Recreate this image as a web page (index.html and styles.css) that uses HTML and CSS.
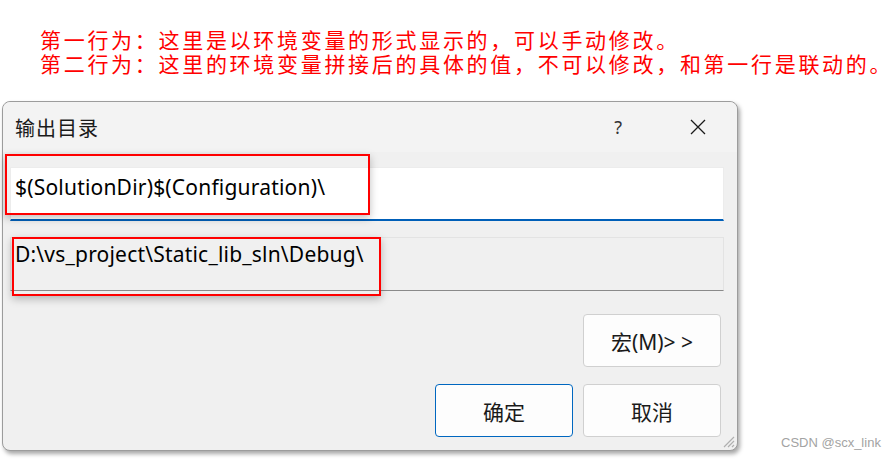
FILE: index.html
```html
<!DOCTYPE html>
<html lang="zh">
<head>
<meta charset="utf-8">
<link rel="stylesheet" href="styles.css">
</head>
<body>
<div class="note">
  <div>第一行为：这里是以环境变量的形式显示的，可以手动修改。</div>
  <div>第二行为：这里的环境变量拼接后的具体的值，不可以修改，和第一行是联动的。</div>
</div>
<div class="dialog">
  <div class="titlebar">
    <span class="title">输出目录</span>
    <span class="help">?</span>
    <svg class="close" width="16" height="16" viewBox="0 0 16 16"><path d="M1 1 L15 15 M15 1 L1 15" stroke="#1a1a1a" stroke-width="1.3" fill="none"/></svg>
  </div>
  <div class="body">
    <div class="field edit">$(SolutionDir)$(Configuration)\</div>
    <div class="field readonly">D:\vs_project\Static_lib_sln\Debug\</div>
    <div class="row row-macro">
      <div class="btn">宏(M)&gt; &gt;</div>
    </div>
    <div class="row row-actions">
      <div class="btn btn-default">确定</div>
      <div class="btn">取消</div>
    </div>
  </div>
  <div class="mark mark-1"></div>
  <div class="mark mark-2"></div>
  <svg class="grip" width="14" height="14" viewBox="0 0 14 14"><path d="M13 3 L3 13 M13 7 L7 13 M13 11 L11 13" stroke="#b0b0b0" stroke-width="1.2" fill="none"/></svg>
</div>
<div class="watermark">CSDN @scx_link</div>
</body>
</html>
```
FILE: styles.css
```css
html, body {
  margin: 0;
  padding: 0;
  background: #ffffff;
}
body {
  width: 895px;
  height: 459px;
  position: relative;
  overflow: hidden;
  font-family: "Noto Sans", "Noto Sans CJK SC", sans-serif;
}
.note {
  padding: 27px 0 0 40px;
  color: #ff0000;
  font-family: "Noto Sans CJK SC", sans-serif;
  font-size: 21px;
  letter-spacing: 2.7px;
  line-height: 24px;
  white-space: nowrap;
}
.dialog {
  position: relative;
  margin: 26px 0 0 2px;
  width: 734px;
  height: 348px;
  background: #f0f0f0;
  border: 1px solid #9c9c9c;
  border-radius: 8px;
  box-shadow: 2px 3px 4px rgba(0, 0, 0, 0.35);
  display: flex;
  flex-direction: column;
}
.titlebar {
  height: 50px;
  background: #f3f3f3;
  border-radius: 8px 8px 0 0;
  display: flex;
  align-items: center;
  padding-left: 12px;
  color: #1a1a1a;
}
.title {
  font-family: "Noto Sans CJK SC", sans-serif;
  font-size: 20px;
  letter-spacing: 1px;
  flex: 1;
}
.help {
  font-family: "Noto Sans", sans-serif;
  font-size: 18px;
  color: #333;
  margin-right: 68px;
}
.close {
  margin-right: 31px;
}
.body {
  padding: 15px 13px 0 7px;
  display: flex;
  flex-direction: column;
}
.field {
  box-sizing: border-box;
  padding: 5px 0 0 4px;
  font-size: 21px;
  letter-spacing: 0.2px;
  color: #000;
  line-height: 28px;
  white-space: nowrap;
}
.edit {
  height: 54px;
  background: #ffffff;
  border: 1px solid #ececec;
  border-bottom: 2px solid #005fb8;
}
.readonly {
  margin-top: 16px;
  height: 54px;
  background: #f0f0f0;
  border: 1px solid #e3e3e3;
  border-bottom: 1px solid #8a8a8a;
  padding-top: 2px;
}
.row {
  display: flex;
  justify-content: flex-end;
  gap: 10px;
  padding-right: 3px;
}
.row-macro {
  margin-top: 23px;
}
.row-actions {
  margin-top: 17px;
}
.btn {
  width: 138px;
  height: 53px;
  box-sizing: border-box;
  background: #fdfdfd;
  border: 1px solid #d0d0d0;
  border-radius: 4px;
  display: flex;
  align-items: center;
  justify-content: center;
  font-family: "Noto Sans", "Noto Sans CJK SC", sans-serif;
  font-size: 21px;
  color: #1a1a1a;
}
.btn-default {
  border: 1px solid #0067c0;
}
.mark {
  position: absolute;
  border: 2px solid #ff0000;
  box-sizing: border-box;
  box-shadow: 0 3px 8px rgba(0, 0, 0, 0.25);
}
.mark-1 {
  left: 2px;
  top: 52px;
  width: 365px;
  height: 61px;
}
.mark-2 {
  left: 9px;
  top: 135px;
  width: 369px;
  height: 59px;
}
.grip {
  position: absolute;
  right: 2px;
  bottom: 2px;
}
.watermark {
  position: absolute;
  left: 781px;
  top: 435px;
  font-family: "Liberation Sans", Arial, sans-serif;
  font-size: 13px;
  color: #a3a3a3;
}
```
